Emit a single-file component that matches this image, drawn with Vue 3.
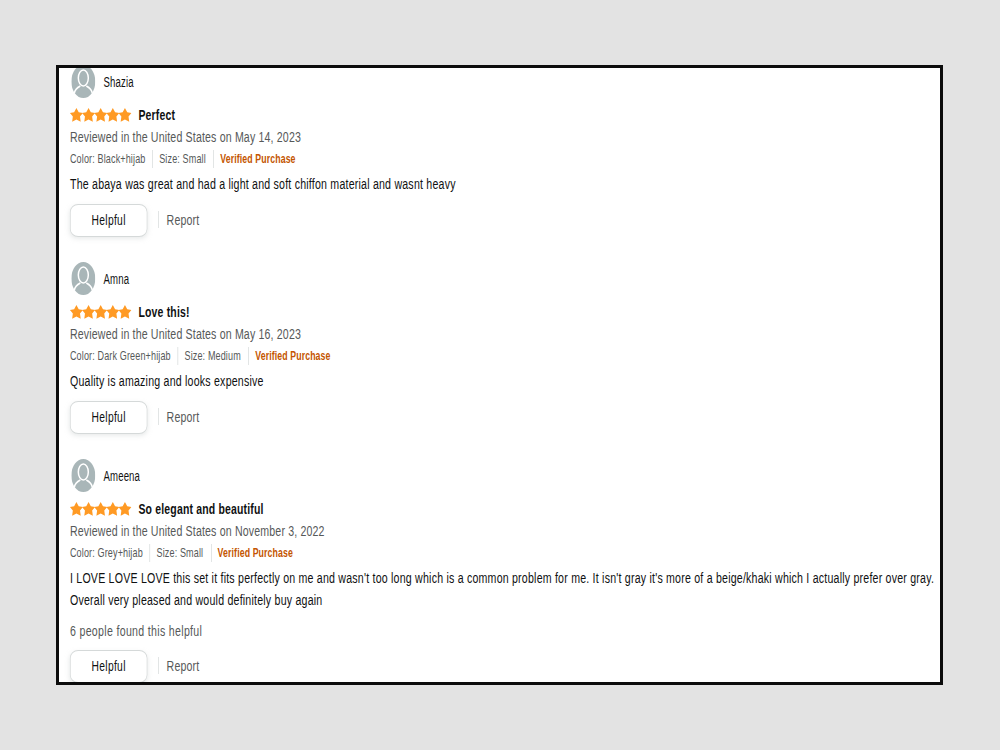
<script setup>
const reviews = [
  {
    name: 'Shazia',
    title: 'Perfect',
    date: 'May 14, 2023',
    color: 'Black+hijab',
    size: 'Small',
    lines: ['The abaya was great and had a light and soft chiffon material and wasnt heavy'],
  },
  {
    name: 'Amna',
    title: 'Love this!',
    date: 'May 16, 2023',
    color: 'Dark Green+hijab',
    size: 'Medium',
    lines: ['Quality is amazing and looks expensive'],
  },
  {
    name: 'Ameena',
    title: 'So elegant and beautiful',
    date: 'November 3, 2022',
    color: 'Grey+hijab',
    size: 'Small',
    lines: [
      'I LOVE LOVE LOVE this set it fits perfectly on me and wasn\'t too long which is a common problem for me. It isn\'t gray it\'s more of a beige/khaki which I actually prefer over gray.',
      'Overall very pleased and would definitely buy again',
    ],
    found: '6 people found this helpful',
  },
]
</script>

<template>
  <div class="page">
    <div class="frame">
      <div class="list">
        <div v-for="r in reviews" :key="r.name" class="review">
          <div class="profile">
            <svg class="avatar" viewBox="0 0 24 33" preserveAspectRatio="none">
              <ellipse cx="12" cy="16.5" rx="12" ry="16.5" fill="#a9b6b8" />
              <ellipse cx="12" cy="13" rx="5" ry="8" fill="none" stroke="#fff" stroke-width="1.5" />
              <path d="M3 28.500C3.500 24.500 6 22.500 9 21M21 28.500C20.500 24.500 18 22.500 15 21" fill="none" stroke="#fff" stroke-width="1.500" />
            </svg>
            <span class="name">{{ r.name }}</span>
          </div>
          <div class="rating">
            <svg class="stars" viewBox="0 0 62 14" preserveAspectRatio="none">
              <polygon
                v-for="i in 5"
                :key="i"
                :transform="`translate(${(i - 1) * 12.2} 0)`"
                points="6.500,0 8.800,4.300 13,5 10.100,8.600 10.800,13.800 6.500,11.500 2.200,13.800 2.900,8.600 0,5 4.200,4.300"
                fill="#ff9a24"
              />
            </svg>
            <span class="title">{{ r.title }}</span>
          </div>
          <div class="date">Reviewed in the United States on {{ r.date }}</div>
          <div class="meta">
            <span>Color: {{ r.color }}</span>
            <span>Size: {{ r.size }}</span>
            <span class="verified">Verified Purchase</span>
          </div>
          <div class="body">
            <div v-for="line in r.lines" :key="line">{{ line }}</div>
          </div>
          <div v-if="r.found" class="found">{{ r.found }}</div>
          <div class="actions">
            <button class="helpful">Helpful</button>
            <span class="report">Report</span>
          </div>
        </div>
      </div>
    </div>
  </div>
</template>

<style>
body {
  background: #e3e3e3;
}
</style>

<style scoped>
.page {
  height: 750px;
  display: flex;
  justify-content: center;
  padding-top: 65px;
  box-sizing: border-box;
  font-family: "Liberation Sans", Arial, sans-serif;
}

.frame {
  width: 887px;
  height: 620px;
  margin-left: -1px;
  box-sizing: border-box;
  border: 3px solid #0c0c0c;
  background: #fff;
  overflow: hidden;
}

/* the whole list is squeezed sideways, like the source picture */
.list {
  width: 1286px;
  margin-top: -3px;
  padding-left: 16px;
  box-sizing: border-box;
  display: flex;
  flex-direction: column;
  gap: 25px;
  transform: scaleX(0.685);
  transform-origin: left top;
}

.profile {
  height: 33px;
  display: flex;
  align-items: center;
  gap: 12px;
  padding-left: 2px;
}

.avatar {
  width: 35px;
  height: 33px;
}

.name {
  font-size: 14px;
  letter-spacing: 0.2px;
  color: #111;
}

.rating {
  height: 17px;
  margin-top: 8px;
  display: flex;
  align-items: center;
  gap: 10px;
}

.stars {
  width: 90px;
  height: 14px;
}

.title {
  font-size: 15.300px;
  letter-spacing: 0.25px;
  font-weight: bold;
  color: #0f1111;
}

.date {
  margin-top: 4px;
  font-size: 15.500px;
  letter-spacing: 0.22px;
  line-height: 20px;
  color: #565959;
}

.meta {
  margin-top: 3px;
  display: flex;
  font-size: 13.200px;
  letter-spacing: 0.2px;
  line-height: 18px;
  color: #565959;
}

.meta span + span {
  margin-left: 10px;
  padding-left: 9px;
  border-left: 1px solid #d5d9d9;
}

.meta .verified {
  margin-left: 11px;
  padding-left: 9px;
  font-size: 12.800px;
  letter-spacing: 0.15px;
  font-weight: bold;
  color: #c45500;
}

.body {
  margin-top: 5px;
  font-size: 15.500px;
  letter-spacing: 0.3px;
  line-height: 22px;
  color: #0f1111;
  white-space: nowrap;
}

.found {
  margin-top: 11px;
  padding-bottom: 1px;
  font-size: 15.500px;
  letter-spacing: 0.45px;
  line-height: 18px;
  color: #565959;
}

.actions {
  margin-top: 9px;
  display: flex;
  align-items: center;
}

.helpful {
  width: 113px;
  height: 33px;
  padding: 0 0 2px;
  border: 1px solid #d5d9d9;
  border-radius: 12px / 8px;
  background: #fff;
  box-shadow: 0 2px 5px rgba(213, 217, 217, 0.5);
  font-family: inherit;
  font-size: 15px;
  letter-spacing: 0.45px;
  color: #0f1111;
}

.report {
  margin-left: 16px;
  margin-bottom: 2px;
  padding-left: 11px;
  border-left: 1px solid #d5d9d9;
  font-size: 15.500px;
  letter-spacing: 0.25px;
  line-height: 17px;
  color: #565959;
}
</style>
